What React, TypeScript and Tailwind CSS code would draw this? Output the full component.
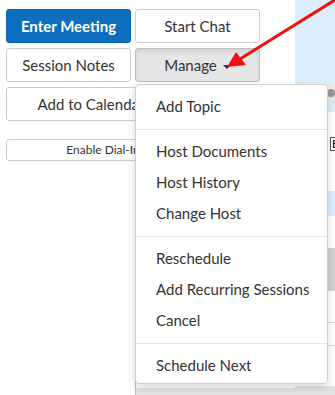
const menuGroups = [
  ["Add Topic"],
  ["Host Documents", "Host History", "Change Host"],
  ["Reschedule", "Add Recurring Sessions", "Cancel"],
  ["Schedule Next"],
];

const btn =
  "h-[34px] rounded-[3px] border border-[#cccccc] bg-white text-[15px] text-[#333333] flex items-center justify-center";

export default function App() {
  return (
    <div className="relative w-[335px] h-[395px] overflow-hidden bg-white font-['Lato','Open_Sans',sans-serif]">
      <div className="flex h-full">
        {/* left: action buttons */}
        <div className="w-[295px] shrink-0 flex flex-col">
          <div className="pl-[6px] pt-[9px] flex flex-col gap-[5px]">
            <div className="flex gap-[4px]">
              <button className="w-[125px] h-[34px] rounded-[3px] border border-[#0a64ad] bg-[#0c6ebd] text-[15px] font-bold text-white">
                Enter Meeting
              </button>
              <button className={`w-[125px] ${btn}`}>Start Chat</button>
            </div>
            <div className="flex gap-[4px]">
              <button className={`w-[125px] ${btn}`}>Session Notes</button>
              <button className="w-[125px] h-[34px] rounded-[3px] border border-[#bdbdbd] bg-[#e6e6e6] shadow-[inset_0_3px_5px_rgba(0,0,0,0.08)] text-[15px] text-[#333333] flex items-center justify-center gap-[6px]">
                Manage
                <span className="w-0 h-0 border-l-[4px] border-r-[4px] border-t-[4px] border-l-transparent border-r-transparent border-t-[#333333] mt-[3px]" />
              </button>
            </div>
            <button className={`w-[170px] ${btn}`}>Add to Calendar</button>
          </div>
          <div className="pl-[6px] mt-[15px]">
            <button className="w-[194px] h-[22px] rounded-[3px] border border-[#cccccc] bg-white text-[12px] text-[#333333]">
              Enable Dial-In
            </button>
          </div>
          <div className="ml-[135px] mt-[79px] flex-1 border-l border-t border-[#bdbdbd]">
            <div className="h-[147px]" />
            <div className="h-full bg-[#e4e4e4]" />
          </div>
        </div>

        {/* right: panel behind the menu */}
        <div className="flex-1 flex flex-col">
          <div className="h-[86px] bg-[#ddeefb]" />
          <div className="h-[14px] bg-[#e9e9e9] flex items-center pl-[32px]">
            <span className="w-[8px] h-[8px] rounded-full bg-[#9a9a9a]" />
          </div>
          <div className="h-[12px] bg-[#ddeefb]" />
          <div className="h-[25px]" />
          <div className="h-[14px] ml-[35px] border border-[#555555] text-[11px] leading-[12px] pl-[1px]">E</div>
          <div className="h-[40px]" />
          <div className="h-[25px] bg-[#ddeefb]" />
          <div className="h-[32px]" />
          <div className="h-[43px] bg-[#d2d2d2]" />
          <div className="h-[32px] border-b border-[#d6d6d6]" />
          <div className="h-[23px] border-b border-[#d6d6d6]" />
          <div className="h-[40px]" />
          <div className="flex-1 bg-[#e4e4e4]" />
        </div>
      </div>

      {/* dropdown menu */}
      <div className="absolute left-[135px] top-[84px] w-[193px] rounded-[4px] border border-[#cfcfcf] bg-white pt-[6px] pb-[2px] shadow-[0_4px_10px_rgba(0,0,0,0.15)]">
        {menuGroups.map((group, gi) => (
          <div key={gi}>
            {gi > 0 && <div className="mt-[7px] mb-[6px] h-px bg-[#e5e5e5]" />}
            {group.map((item) => (
              <div
                key={item}
                className="h-[31px] pl-[20px] flex items-center text-[15px] text-[#333333] whitespace-nowrap"
              >
                {item}
              </div>
            ))}
          </div>
        ))}
      </div>

      {/* red annotation arrow */}
      <svg className="absolute left-0 top-0" width="335" height="395" viewBox="0 0 335 395">
        <line x1="338" y1="-2" x2="240" y2="59" stroke="#ee1111" strokeWidth="3" strokeLinecap="round" />
        <polygon points="227,67 236,52 246,65" fill="#ee1111" />
      </svg>
    </div>
  );
}
